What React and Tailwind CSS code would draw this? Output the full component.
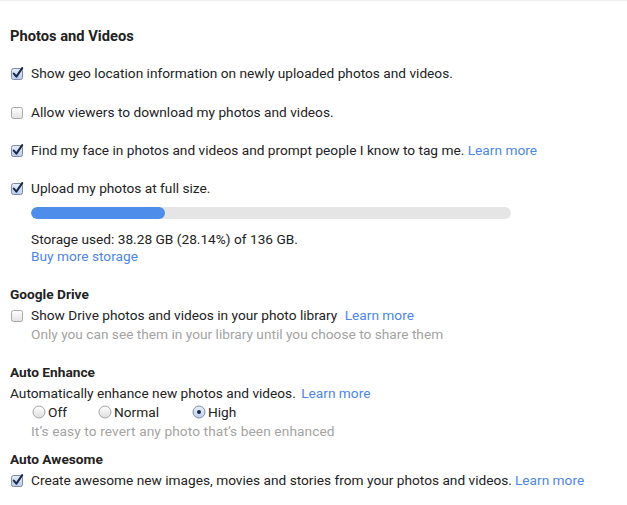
import React from "react";

function Checkbox({ checked }) {
  return (
    <svg width="15" height="15" viewBox="0 0 15 15" className="shrink-0">
      <defs>
        <linearGradient id={checked ? "cbOn" : "cbOff"} x1="0" y1="0" x2="0" y2="1">
          {checked ? (
            <>
              <stop offset="0" stopColor="#e6eefb" />
              <stop offset="1" stopColor="#b9cdee" />
            </>
          ) : (
            <>
              <stop offset="0" stopColor="#ffffff" />
              <stop offset="1" stopColor="#e2e2e2" />
            </>
          )}
        </linearGradient>
      </defs>
      <rect
        x="1.5"
        y="2.5"
        width="11"
        height="11"
        rx="2"
        fill={checked ? "url(#cbOn)" : "url(#cbOff)"}
        stroke={checked ? "#7d8aa3" : "#a8a8a8"}
        strokeWidth="1"
      />
      {checked && (
        <path
          d="M3.8 7.6 L6.4 10.6 L12.2 2.2"
          fill="none"
          stroke="#1c2a4a"
          strokeWidth="2.1"
          strokeLinecap="round"
          strokeLinejoin="round"
        />
      )}
    </svg>
  );
}

function Radio({ checked }) {
  return (
    <svg width="14" height="14" viewBox="0 0 14 14" className="shrink-0">
      <defs>
        <linearGradient id={checked ? "rOn" : "rOff"} x1="0" y1="0" x2="0" y2="1">
          {checked ? (
            <>
              <stop offset="0" stopColor="#eaf0fb" />
              <stop offset="1" stopColor="#bfd0ee" />
            </>
          ) : (
            <>
              <stop offset="0" stopColor="#ffffff" />
              <stop offset="1" stopColor="#dedede" />
            </>
          )}
        </linearGradient>
      </defs>
      <circle
        cx="7"
        cy="7"
        r="6"
        fill={checked ? "url(#rOn)" : "url(#rOff)"}
        stroke={checked ? "#7d8aa3" : "#a4a4a4"}
        strokeWidth="1"
      />
      {checked && <circle cx="7" cy="7" r="2" fill="#1c2a4a" />}
    </svg>
  );
}

const Link = ({ children, className = "" }) => (
  <span className={"text-[#4d86e8] " + className}>{children}</span>
);

function CheckRow({ checked, children, className = "" }) {
  return (
    <div className={"flex items-center h-[19px] " + className}>
      <div className="w-[21px] flex items-center">
        <Checkbox checked={checked} />
      </div>
      <div className="whitespace-nowrap">{children}</div>
    </div>
  );
}

export default function App() {
  return (
    <div
      className="w-[627px] h-[505px] bg-white border-t border-[#f0f0f0] text-[13.7px] text-[#222] overflow-hidden"
      style={{ fontFamily: "Roboto, 'Noto Sans', Arial, sans-serif" }}
    >
      <div className="flex flex-col pl-[10px]">
        <div className="mt-[26px] h-[19px] leading-[19px] font-bold text-[14.7px]">Photos and Videos</div>

        <CheckRow checked className="mt-[18px] leading-[19px]">
          Show geo location information on newly uploaded photos and videos.
        </CheckRow>
        <CheckRow className="mt-[20px] leading-[19px]">
          Allow viewers to download my photos and videos.
        </CheckRow>
        <CheckRow checked className="mt-[19px] leading-[19px]">
          Find my face in photos and videos and prompt people I know to tag me. <Link>Learn more</Link>
        </CheckRow>
        <CheckRow checked className="mt-[19px] leading-[19px]">
          Upload my photos at full size.
        </CheckRow>

        <div className="pl-[21px] mt-[9px]">
          <div className="w-[480px] h-[12px] rounded-full bg-[#e5e5e5] overflow-hidden">
            <div className="h-full w-[134px] rounded-full bg-[#4f8deb]" />
          </div>
          <div className="mt-[12px] h-[17px] leading-[17px]">
            Storage used: 38.28 GB (28.14%) of 136 GB.
          </div>
          <div className="h-[17px] leading-[17px]">
            <Link>Buy more storage</Link>
          </div>
        </div>

        <div className="mt-[20px] h-[19px] leading-[19px] font-bold">Google Drive</div>
        <CheckRow className="mt-[2px] leading-[19px]">
          Show Drive photos and videos in your photo library <Link className="ml-[4px]">Learn more</Link>
        </CheckRow>
        <div className="pl-[21px] h-[19px] leading-[19px] text-[#a3a3a3]">
          Only you can see them in your library until you choose to share them
        </div>

        <div className="mt-[19px] h-[19px] leading-[19px] font-bold">Auto Enhance</div>
        <div className="mt-[2px] h-[19px] leading-[19px]">
          Automatically enhance new photos and videos. <Link className="ml-[2px]">Learn more</Link>
        </div>
        <div className="pl-[22px] h-[18px] leading-[18px] flex items-center">
          <div className="flex items-center w-[66px] gap-[2px]">
            <Radio />
            <span>Off</span>
          </div>
          <div className="flex items-center w-[94px] gap-[2px]">
            <Radio />
            <span>Normal</span>
          </div>
          <div className="flex items-center gap-[2px]">
            <Radio checked />
            <span>High</span>
          </div>
        </div>
        <div className="pl-[21px] mt-[1px] h-[19px] leading-[19px] text-[#a3a3a3] tracking-[0.1px]">
          It’s easy to revert any photo that’s been enhanced
        </div>

        <div className="mt-[9px] h-[19px] leading-[19px] font-bold">Auto Awesome</div>
        <CheckRow checked className="mt-[2px] leading-[19px]">
          Create awesome new images, movies and stories from your photos and videos.
          <Link className="ml-[3px]">Learn more</Link>
        </CheckRow>
      </div>
    </div>
  );
}
